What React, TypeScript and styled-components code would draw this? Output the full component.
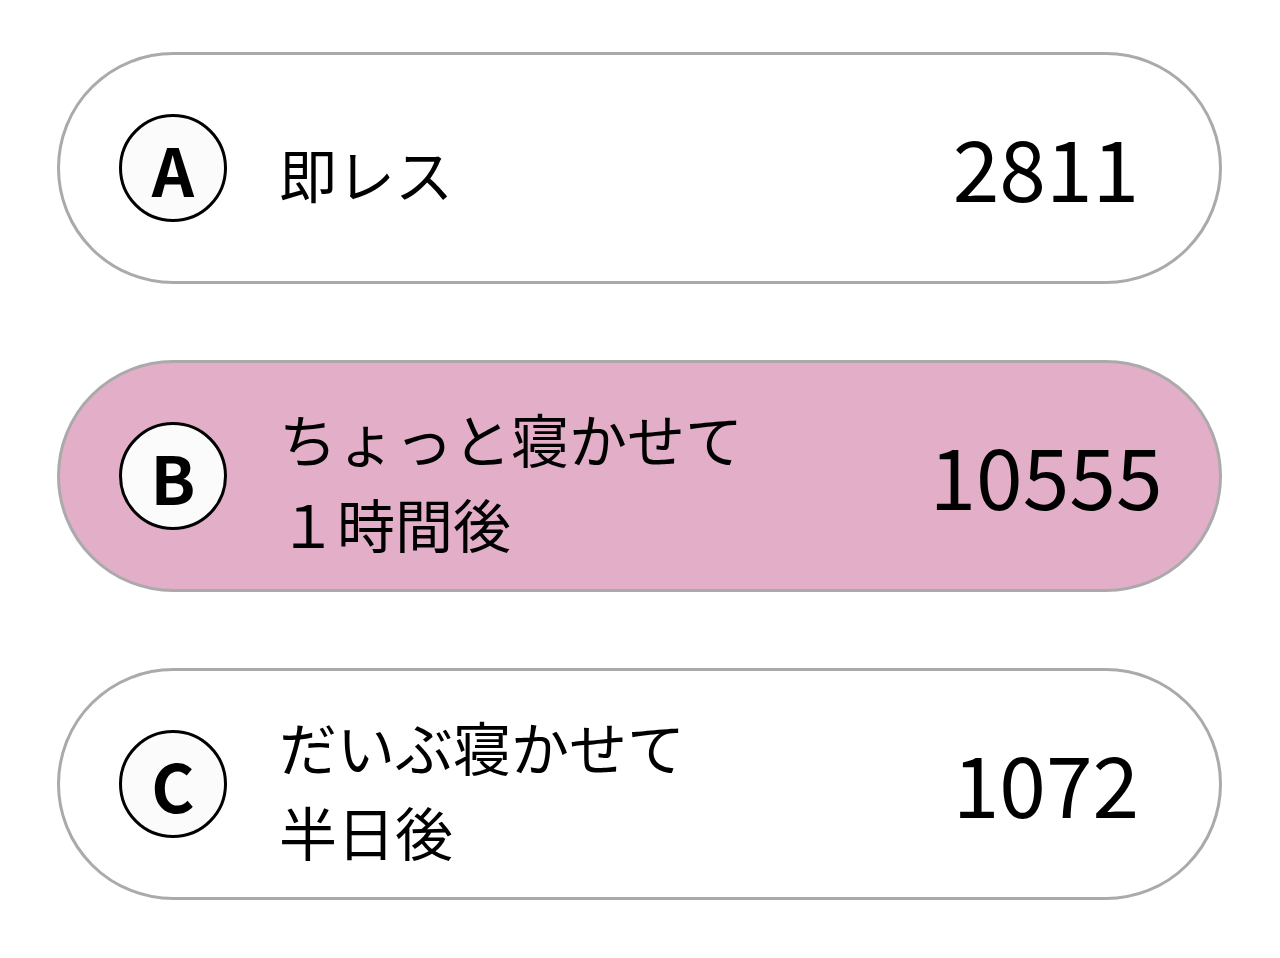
import * as React from 'react';
import styled, { createGlobalStyle } from 'styled-components';

type Choice = {
	id: string;
	lines: string[];
	count: number;
	highlighted?: boolean;
};

const choices: Choice[] = [
	{ id: 'A', lines: ['即レス'], count: 2811 },
	{ id: 'B', lines: ['ちょっと寝かせて', '１時間後'], count: 10555, highlighted: true },
	{ id: 'C', lines: ['だいぶ寝かせて', '半日後'], count: 1072 },
];

const GlobalStyle = createGlobalStyle`
	html, body {
		margin: 0;
		padding: 0;
		background: #ffffff;
	}
	body {
		font-family: 'Noto Sans CJK JP', 'Noto Sans', sans-serif;
		color: #000;
	}
`;

export default function App() {
	return (
		<>
			<GlobalStyle />
			<Page>
				<ChoiceList>
					{choices.map(c => (
						<ChoiceCard key={c.id} highlighted={!!c.highlighted}>
							<Badge>{c.id}</Badge>
							<Label>
								{c.lines.map(line => (
									<LabelLine key={line}>{line}</LabelLine>
								))}
							</Label>
							<Count>{c.count}</Count>
						</ChoiceCard>
					))}
				</ChoiceList>
			</Page>
		</>
	);
}

const Page = styled.div`
	width: 1280px;
	height: 958px;
	box-sizing: border-box;
	padding: 52px 58px 0 57px;
`;

const ChoiceList = styled.div`
	display: flex;
	flex-direction: column;
	gap: 76px;
`;

const ChoiceCard = styled('div')<{ highlighted: boolean }>`
	height: 232px;
	box-sizing: border-box;
	border: 3px solid #aaaaaa;
	border-radius: 116px;
	background: ${p => (p.highlighted ? '#e2aec8' : '#ffffff')};
	display: flex;
	flex-direction: row;
	align-items: center;
	padding: 0 53px 0 59px;
`;

const Badge = styled.div`
	flex: none;
	width: 108px;
	height: 108px;
	box-sizing: border-box;
	border: 3px solid #000;
	border-radius: 50%;
	background: #fbfbfb;
	display: flex;
	align-items: center;
	justify-content: center;
	font-family: 'Noto Sans CJK JP', sans-serif;
	font-weight: 700;
	font-size: 66px;
	line-height: 1;
`;

const Label = styled.div`
	margin-left: 52px;
	display: flex;
	flex-direction: column;
	padding-top: 10px;
`;

const LabelLine = styled.div`
	font-size: 58px;
	line-height: 85px;
	white-space: nowrap;
`;

const Count = styled.div`
	margin-left: auto;
	width: 240px;
	text-align: center;
	font-size: 84px;
	line-height: 1;
	padding-bottom: 4px;
`;
